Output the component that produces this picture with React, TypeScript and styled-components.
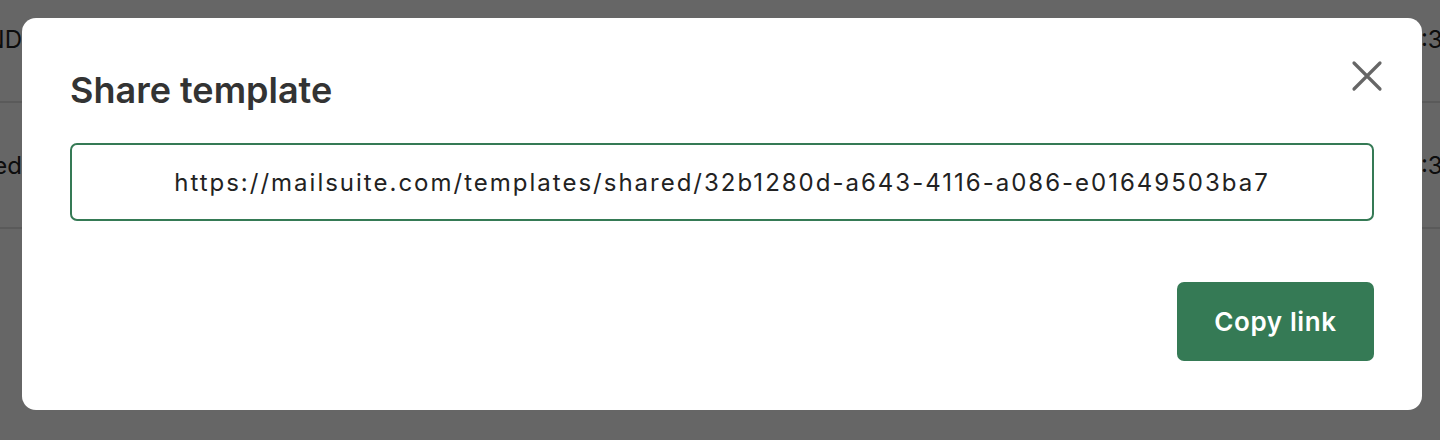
import styled, { createGlobalStyle } from "styled-components";

const GlobalStyle = createGlobalStyle`
    html, body {
        margin: 0;
        padding: 0;
        background: #ffffff;
        font-family: Inter, "Noto Sans", "Liberation Sans", sans-serif;
        color: #222222;
        overflow: hidden;
    }
`;

// rows of the list page behind the dialog
const rows = [
    { name: "SEND", time: "10:30" },
    { name: "Archived", time: "10:32" },
];

const App = () => {
    return <Page>
        <GlobalStyle />
        <Table>
            {rows.map((row) => (
                <Row key={row.name}>
                    <NameCell><span>{row.name}</span></NameCell>
                    <Spacer />
                    <TimeCell>{row.time}</TimeCell>
                </Row>
            ))}
        </Table>
        <Overlay>
            <Modal role="dialog" aria-labelledby="share-title">
                <Header>
                    <Title id="share-title">Share template</Title>
                    <CloseButton aria-label="Close">
                        <svg width="32" height="32" viewBox="0 0 32 32" fill="none">
                            <path d="M3 3L29 29M29 3L3 29" stroke="#666666" strokeWidth="3.2" strokeLinecap="round" />
                        </svg>
                    </CloseButton>
                </Header>
                <LinkInput readOnly value="https://mailsuite.com/templates/shared/32b1280d-a643-4116-a086-e01649503ba7" />
                <Footer>
                    <PrimaryButton>Copy link</PrimaryButton>
                </Footer>
            </Modal>
        </Overlay>
    </Page>
};

const Page = styled.div`
    position: relative;
    width: 1440px;
    height: 440px;
    overflow: hidden;
`;

const Table = styled.div`
    display: flex;
    flex-direction: column;
    margin-top: -23px;
`;

const Row = styled.div`
    height: 126px;
    display: flex;
    align-items: center;
    border-bottom: 2px solid #e2e2e2;
    box-sizing: border-box;
    font-size: 24px;
`;

const NameCell = styled.div`
    width: 22px;
    display: flex;
    justify-content: flex-end;
    white-space: nowrap;
`;

const Spacer = styled.div`
    flex: 1;
`;

const TimeCell = styled.div`
    width: 44px;
    white-space: nowrap;
`;

const Overlay = styled.div`
    position: absolute;
    inset: 0;
    background: rgba(0, 0, 0, 0.6);
    display: flex;
    align-items: flex-start;
    padding: 18px 18px 0 22px;
    box-sizing: border-box;
`;

const Modal = styled.div`
    width: 1400px;
    height: 392px;
    background: #ffffff;
    border-radius: 14px;
    padding: 48px 48px 49px 48px;
    box-sizing: border-box;
    display: flex;
    flex-direction: column;
`;

const Header = styled.div`
    display: flex;
    justify-content: space-between;
    align-items: flex-start;
    height: 77px;
`;

const Title = styled.h2`
    margin: 2px 0 0 0;
    font-size: 36px;
    line-height: 44px;
    font-weight: 600;
    color: #333333;
`;

const CloseButton = styled.button`
    border: none;
    background: none;
    padding: 0;
    margin: -6px -9px 0 0;
    width: 32px;
    height: 32px;
    cursor: pointer;
    svg { display: block; }
`;

const LinkInput = styled.input`
    height: 78px;
    border: 2px solid #357a55;
    border-radius: 7px;
    box-sizing: border-box;
    text-align: center;
    font-family: Inter, "Noto Sans", sans-serif;
    font-size: 24px;
    letter-spacing: 2px;
    color: #222222;
    outline: none;
`;

const Footer = styled.div`
    margin-top: auto;
    display: flex;
    justify-content: flex-end;
`;

const PrimaryButton = styled.button`
    width: 197px;
    height: 79px;
    border: none;
    border-radius: 7px;
    background: #357a55;
    color: #ffffff;
    font-family: Inter, "Noto Sans", sans-serif;
    font-size: 26px;
    font-weight: 600;
    letter-spacing: 0.6px;
    cursor: pointer;
`;

export default App;
